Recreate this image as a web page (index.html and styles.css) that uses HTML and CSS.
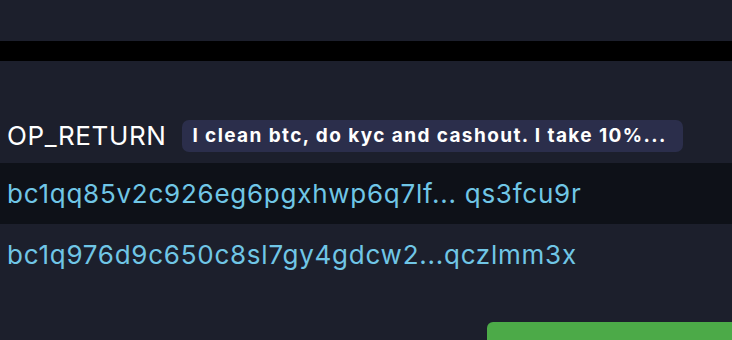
FILE: index.html
```html
<!DOCTYPE html>
<html>
<head>
<meta charset="utf-8">
<link rel="stylesheet" href="styles.css">
</head>
<body>
<div class="top"></div>
<div class="band"></div>
<div class="content">
  <div class="op-row">
    <span class="op-label">OP_RETURN</span>
    <span class="badge">I clean btc, do kyc and cashout. I take 10%...</span>
  </div>
  <div class="addr-row dark"><span class="addr">bc1qq85v2c926eg6pgxhwp6q7lf... qs3fcu9r</span></div>
  <div class="addr-row"><span class="addr">bc1q976d9c650c8sl7gy4gdcw2...qczlmm3x</span></div>
  <div class="actions"><div class="btn"></div></div>
</div>
</body>
</html>
```
FILE: styles.css
```css
html, body {
  margin: 0;
  padding: 0;
  background: #1c1f2c;
  overflow: hidden;
  height: 340px;
  font-family: Inter, "Liberation Sans", sans-serif;
}
.top {
  height: 41px;
}
.band {
  height: 20px;
  background: #000000;
}
.content {
  padding-top: 59px;
}
.op-row {
  display: flex;
  align-items: center;
  height: 32px;
  padding-left: 7px;
  gap: 16px;
  margin-bottom: 11px;
}
.op-label {
  color: #ffffff;
  font-size: 26px;
  letter-spacing: 0.6px;
  line-height: 32px;
}
.badge {
  background: #2b2e4b;
  color: #ffffff;
  font-weight: 700;
  font-size: 19px;
  letter-spacing: 1.4px;
  line-height: 32px;
  height: 32px;
  padding: 0 16px 0 10px;
  border-radius: 7px;
  white-space: nowrap;
}
.addr-row {
  height: 61px;
  display: flex;
  align-items: center;
  padding-left: 7px;
}
.addr-row.dark {
  background: #0e1118;
}
.addr {
  color: #70c6e6;
  font-size: 26px;
  letter-spacing: 0.75px;
}
.actions {
  padding-top: 37px;
  padding-left: 487px;
}
.btn {
  width: 245px;
  height: 18px;
  background: #4caa48;
  border-radius: 6px 0 0 0;
}
```
